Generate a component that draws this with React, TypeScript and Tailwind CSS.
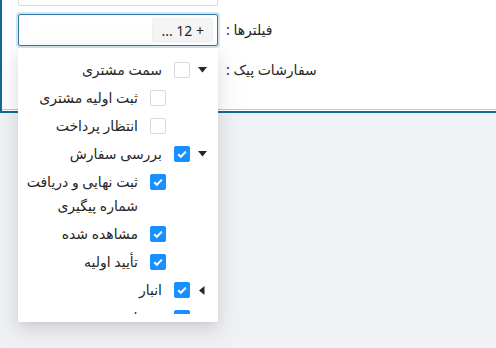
import React from "react";

const FONT = "font-['Noto_Sans','DejaVu_Sans',sans-serif]";

function CaretDown() {
  return (
    <svg width="9" height="6" viewBox="0 0 9 6">
      <polygon points="0,0 9,0 4.5,5.5" fill="#262626" />
    </svg>
  );
}
function CaretLeft() {
  return (
    <svg width="6" height="9" viewBox="0 0 6 9">
      <polygon points="5.5,0 5.5,9 0,4.5" fill="#262626" />
    </svg>
  );
}

function Checkbox({ checked }: { checked: boolean }) {
  return checked ? (
    <span className="mt-[4px] flex h-4 w-4 shrink-0 items-center justify-center rounded-[2px] bg-[#1890ff]">
      <svg width="16" height="16" viewBox="0 0 16 16">
        <polyline points="4.2,8.2 6.9,10.8 11.8,5.6" fill="none" stroke="#fff" strokeWidth="2" />
      </svg>
    </span>
  ) : (
    <span className="mt-[4px] block h-4 w-4 shrink-0 rounded-[2px] border border-[#d9d9d9] bg-white" />
  );
}

type Node = {
  level: number;
  caret?: "down" | "left";
  checked: boolean;
  lines: string[];
};

const nodes: Node[] = [
  { level: 0, caret: "down", checked: false, lines: ["سمت مشتری"] },
  { level: 1, checked: false, lines: ["ثبت اولیه مشتری"] },
  { level: 1, checked: false, lines: ["انتظار پرداخت"] },
  { level: 0, caret: "down", checked: true, lines: ["بررسی سفارش"] },
  { level: 1, checked: true, lines: ["ثبت نهایی و دریافت", "شماره پیگیری"] },
  { level: 1, checked: true, lines: ["مشاهده شده"] },
  { level: 1, checked: true, lines: ["تأیید اولیه"] },
  { level: 0, caret: "left", checked: true, lines: ["انبار"] },
  { level: 0, caret: "left", checked: true, lines: ["تحویل"] },
];

function TreeRow({ node }: { node: Node }) {
  return (
    <div dir="rtl" className="flex items-start pb-[4px]">
      {node.level > 0 && <span className="w-6 shrink-0" />}
      <span className="flex h-6 w-6 shrink-0 items-center justify-center">
        {node.caret === "down" && <CaretDown />}
        {node.caret === "left" && <CaretLeft />}
      </span>
      <Checkbox checked={node.checked} />
      <span className="ml-0 mr-[8px] px-[4px] text-[14px] leading-6 text-[#262626]">
        {node.lines.map((l, i) => (
          <span key={i} className="block whitespace-nowrap">
            {l}
          </span>
        ))}
      </span>
    </div>
  );
}

export default function App() {
  return (
    <div className={`relative h-[348px] w-[496px] overflow-hidden bg-[#f0f2f5] ${FONT}`}>
      <div className="h-[113px] border-b-2 border-l-2 border-[#0f6a9a] bg-white">
        <div className="h-[110px] overflow-hidden border-b border-[#c9c9c9] pl-4">
          <div className="mt-[-26px] flex flex-col gap-2">
            <div className="flex items-center">
              <div className="h-8 w-[200px] rounded-[2px] border border-[#d9d9d9] bg-white" />
            </div>
            <div className="flex items-center">
              <div className="flex h-8 w-[200px] items-center justify-end rounded-[2px] border border-[#2f78a6] bg-white pr-[4px] shadow-[0_0_0_2px_rgba(47,120,166,0.2)]">
                <span className="flex h-6 items-center rounded-[2px] border border-[#f0f0f0] bg-[#f5f5f5] px-[8px] text-[14px] text-[#262626]">
                  ... 12 +
                </span>
              </div>
              <div dir="rtl" className="ml-2 h-8 flex-1 text-left text-[14px] leading-8 text-[#262626]">
                فیلترها :
              </div>
            </div>
            <div className="flex items-center">
              <div className="h-8 w-[200px] rounded-[2px] border border-[#d9d9d9] bg-white" />
              <div dir="rtl" className="ml-2 h-8 flex-1 text-left text-[14px] leading-8 text-[#262626]">
                سفارشات پیک :
              </div>
            </div>
          </div>
        </div>
      </div>

      <div className="absolute left-[18px] top-[48px] w-[200px] rounded-[2px] bg-white px-[4px] pb-[8px] pt-[10px] shadow-[0_3px_6px_-4px_rgba(0,0,0,0.12),0_6px_16px_0_rgba(0,0,0,0.08),0_9px_28px_8px_rgba(0,0,0,0.05)]">
        <div className="h-[256px] overflow-hidden">
          {nodes.map((n, i) => (
            <TreeRow key={i} node={n} />
          ))}
        </div>
      </div>
    </div>
  );
}
